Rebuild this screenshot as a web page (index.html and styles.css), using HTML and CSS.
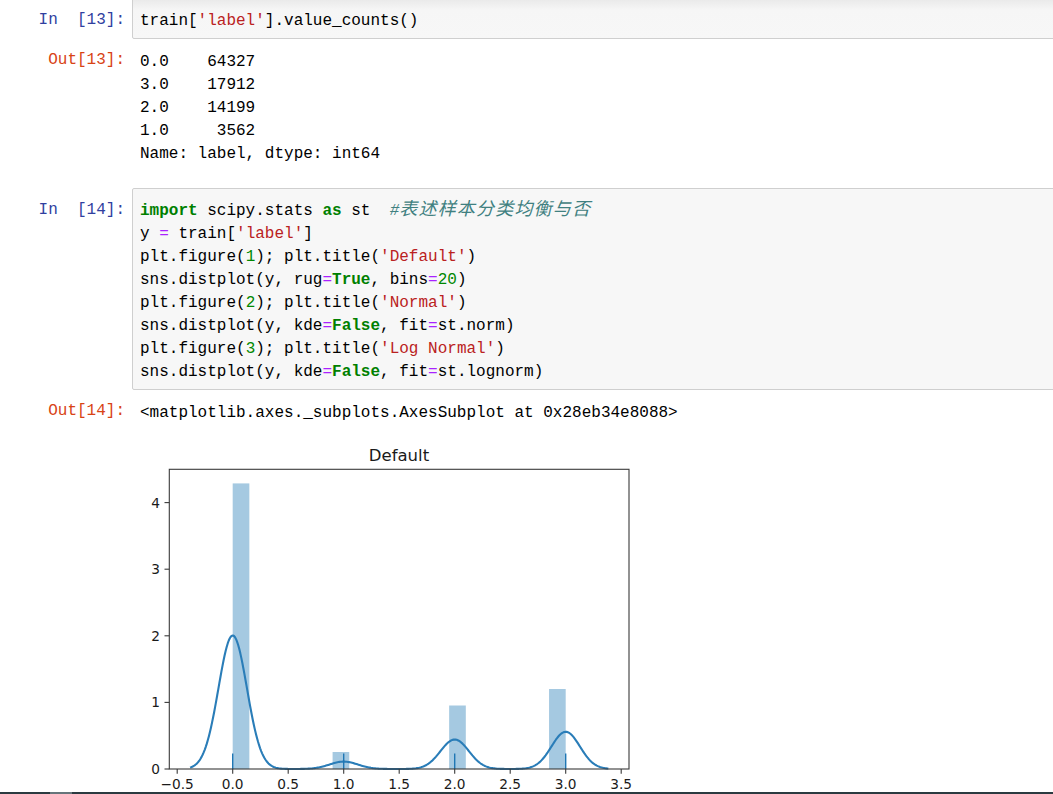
FILE: index.html
```html
<!DOCTYPE html>
<html>
<head>
<meta charset="utf-8">
<title>Notebook</title>
<link rel="stylesheet" href="styles.css">
</head>
<body>
<div class="page">
  <div class="viewport">
    <div class="notebook">
      <div class="cell first-cell">
        <div class="row">
          <div class="prompt in-prompt">In  [13]:</div>
          <div class="input-area fade-top">
            <div class="code">
              <div class="line">train[<span class="s">'label'</span>].value_counts()</div>
            </div>
          </div>
        </div>
        <div class="row output-row">
          <div class="prompt out-prompt">Out[13]:</div>
          <div class="output-sub">
            <div class="out-text">
              <div class="line">0.0    64327</div>
              <div class="line">3.0    17912</div>
              <div class="line">2.0    14199</div>
              <div class="line">1.0     3562</div>
              <div class="line">Name: label, dtype: int64</div>
            </div>
          </div>
        </div>
      </div>

      <div class="cell second-cell">
        <div class="row">
          <div class="prompt in-prompt">In  [14]:</div>
          <div class="input-area">
            <div class="code">
              <div class="line"><span class="k">import</span> scipy.stats <span class="k">as</span> st  <span class="c">#<span class="cjk">表述样本分类均衡与否</span></span></div>
              <div class="line">y <span class="o">=</span> train[<span class="s">'label'</span>]</div>
              <div class="line">plt.figure(<span class="n">1</span>); plt.title(<span class="s">'Default'</span>)</div>
              <div class="line">sns.distplot(y, rug<span class="o">=</span><span class="k">True</span>, bins<span class="o">=</span><span class="n">20</span>)</div>
              <div class="line">plt.figure(<span class="n">2</span>); plt.title(<span class="s">'Normal'</span>)</div>
              <div class="line">sns.distplot(y, kde<span class="o">=</span><span class="k">False</span>, fit<span class="o">=</span>st.norm)</div>
              <div class="line">plt.figure(<span class="n">3</span>); plt.title(<span class="s">'Log Normal'</span>)</div>
              <div class="line">sns.distplot(y, kde<span class="o">=</span><span class="k">False</span>, fit<span class="o">=</span>st.lognorm)</div>
            </div>
          </div>
        </div>
        <div class="row output-row">
          <div class="prompt out-prompt">Out[14]:</div>
          <div class="output-sub">
            <div class="out-text">
              <div class="line">&lt;matplotlib.axes._subplots.AxesSubplot at 0x28eb34e8088&gt;</div>
            </div>
          </div>
        </div>
        <div class="row chart-row">
          <div class="prompt"></div>
          <div class="output-sub">
            <svg class="chart" width="500" height="360" viewBox="0 0 500 360">
              <text class="title" x="259" y="21">Default</text>
              <g class="bars">
                <rect x="92.7" y="43.4" width="16.65" height="285.6"/>
                <rect x="192.6" y="312" width="16.65" height="17"/>
                <rect x="309.15" y="265.5" width="16.65" height="63.5"/>
                <rect x="409.05" y="249" width="16.65" height="80"/>
              </g>
              <path id="kde" class="kde" d=""/>
              <g class="rug">
                <line x1="92.7" y1="329" x2="92.7" y2="313.5"/>
                <line x1="203.7" y1="329" x2="203.7" y2="313.5"/>
                <line x1="314.7" y1="329" x2="314.7" y2="313.5"/>
                <line x1="425.7" y1="329" x2="425.7" y2="313.5"/>
              </g>
              <rect class="frame" x="29.3" y="29.3" width="459.7" height="299.7"/>
              <g class="ticks">
                <line x1="24.5" y1="329" x2="29.3" y2="329"/>
                <line x1="24.5" y1="262.4" x2="29.3" y2="262.4"/>
                <line x1="24.5" y1="195.8" x2="29.3" y2="195.8"/>
                <line x1="24.5" y1="129.2" x2="29.3" y2="129.2"/>
                <line x1="24.5" y1="62.6" x2="29.3" y2="62.6"/>
                <line x1="37.2" y1="329" x2="37.2" y2="333.8"/>
                <line x1="92.7" y1="329" x2="92.7" y2="333.8"/>
                <line x1="148.2" y1="329" x2="148.2" y2="333.8"/>
                <line x1="203.7" y1="329" x2="203.7" y2="333.8"/>
                <line x1="259.2" y1="329" x2="259.2" y2="333.8"/>
                <line x1="314.7" y1="329" x2="314.7" y2="333.8"/>
                <line x1="370.2" y1="329" x2="370.2" y2="333.8"/>
                <line x1="425.7" y1="329" x2="425.7" y2="333.8"/>
                <line x1="481.2" y1="329" x2="481.2" y2="333.8"/>
              </g>
              <g class="ylabels">
                <text x="20" y="334">0</text>
                <text x="20" y="267.4">1</text>
                <text x="20" y="200.8">2</text>
                <text x="20" y="134.2">3</text>
                <text x="20" y="67.6">4</text>
              </g>
              <g class="xlabels">
                <text x="37.2" y="348.5">−0.5</text>
                <text x="92.7" y="348.5">0.0</text>
                <text x="148.2" y="348.5">0.5</text>
                <text x="203.7" y="348.5">1.0</text>
                <text x="259.2" y="348.5">1.5</text>
                <text x="314.7" y="348.5">2.0</text>
                <text x="370.2" y="348.5">2.5</text>
                <text x="425.7" y="348.5">3.0</text>
                <text x="481.2" y="348.5">3.5</text>
              </g>
            </svg>
          </div>
        </div>
      </div>
    </div>
  </div>
  <div class="taskbar"><div class="taskbar-seg"></div></div>
</div>
<script src="script.js"></script>
</body>
</html>
```

FILE: styles.css
```css
html, body {
  margin: 0;
  padding: 0;
}

body {
  width: 1053px;
  height: 794px;
  overflow: hidden;
  background: #ffffff;
  font-family: "Liberation Mono", monospace;
}

.page {
  display: flex;
  flex-direction: column;
  height: 794px;
}

.viewport {
  flex: 1;
  overflow: hidden;
}

.taskbar {
  height: 2px;
  background: #2b3a40;
  display: flex;
}

.taskbar-seg {
  margin-left: 50px;
  width: 22px;
  background: #66747a;
}

.notebook {
  width: 1058px;
  margin-top: -2px;
}

.cell {
  display: flex;
  flex-direction: column;
}

.second-cell {
  margin-top: 24px;
}

.row {
  display: flex;
  align-items: flex-start;
}

.prompt {
  flex: 0 0 125px;
  text-align: right;
  font-family: "Liberation Mono", monospace;
  font-size: 16px;
  line-height: 23px;
  white-space: pre;
}

.in-prompt {
  color: #303f9f;
  padding-top: 11px;
}

.out-prompt {
  color: #d84315;
  line-height: 20px;
  padding-top: 1px;
}

.input-area {
  flex: 1;
  margin-left: 7px;
  border: 1px solid #cfcfcf;
  border-radius: 2px;
  background: #f7f7f7;
  padding: 9px 7px 7px 7px;
}

.fade-top {
  background: linear-gradient(#e9e9e9 0px, #f6f6f6 11px, #f7f7f7 100%);
}

.code,
.out-text {
  font-family: "Liberation Mono", monospace;
  font-size: 16px;
  color: #000000;
}

.line {
  box-sizing: border-box;
  height: 23px;
  padding-top: 3px;
  line-height: 20px;
  white-space: pre;
  overflow: visible;
}

.k {
  color: #008000;
  font-weight: bold;
}

.s {
  color: #ba2121;
}

.n {
  color: #008800;
}

.o {
  color: #aa22ff;
}

.c {
  color: #408080;
  font-style: italic;
}

.cjk {
  font-family: "Noto Sans CJK SC", sans-serif;
  font-size: 18px;
  letter-spacing: 1.2px;
  line-height: 0;
  font-style: italic;
}

.output-row {
  margin-top: 10px;
}

.output-sub {
  flex: 1;
  margin-left: 7px;
  padding-left: 8px;
}

.chart-row {
  margin-top: 17px;
}

.chart {
  display: block;
  overflow: visible;
}

.chart text {
  font-family: "DejaVu Sans", sans-serif;
  fill: #1a1a1a;
}

.chart .title {
  font-size: 16.5px;
  text-anchor: middle;
}

.chart .ylabels text {
  font-size: 13.7px;
  text-anchor: end;
}

.chart .xlabels text {
  font-size: 13.7px;
  text-anchor: middle;
}

.bars rect {
  fill: #1f77b4;
  fill-opacity: 0.4;
}

.kde {
  fill: none;
  stroke: #2a7db8;
  stroke-width: 2.1;
  stroke-linejoin: round;
  stroke-linecap: butt;
}

.rug line {
  stroke: #1f77b4;
  stroke-width: 1.4;
}

.frame {
  fill: none;
  stroke: #3a3a3a;
  stroke-width: 1.1;
}

.ticks line {
  stroke: #3a3a3a;
  stroke-width: 1.1;
}
```

FILE: script.js
```js
(function () {
  var counts = [[0, 64327], [1, 3562], [2, 14199], [3, 17912]];
  var N = 100000;
  var h = 0.128;
  function X(v) { return 92.7 + 111 * v; }
  function Y(v) { return 329 - 66.6 * v; }
  var lo = -0.384, hi = 3.384, steps = 400;
  var d = '';
  for (var i = 0; i <= steps; i++) {
    var x = lo + (hi - lo) * i / steps;
    var s = 0;
    for (var j = 0; j < counts.length; j++) {
      var z = (x - counts[j][0]) / h;
      s += counts[j][1] * Math.exp(-0.5 * z * z);
    }
    s /= N * h * Math.sqrt(2 * Math.PI);
    d += (i ? 'L' : 'M') + X(x).toFixed(2) + ' ' + Y(s).toFixed(2);
  }
  document.getElementById('kde').setAttribute('d', d);
})();
```
